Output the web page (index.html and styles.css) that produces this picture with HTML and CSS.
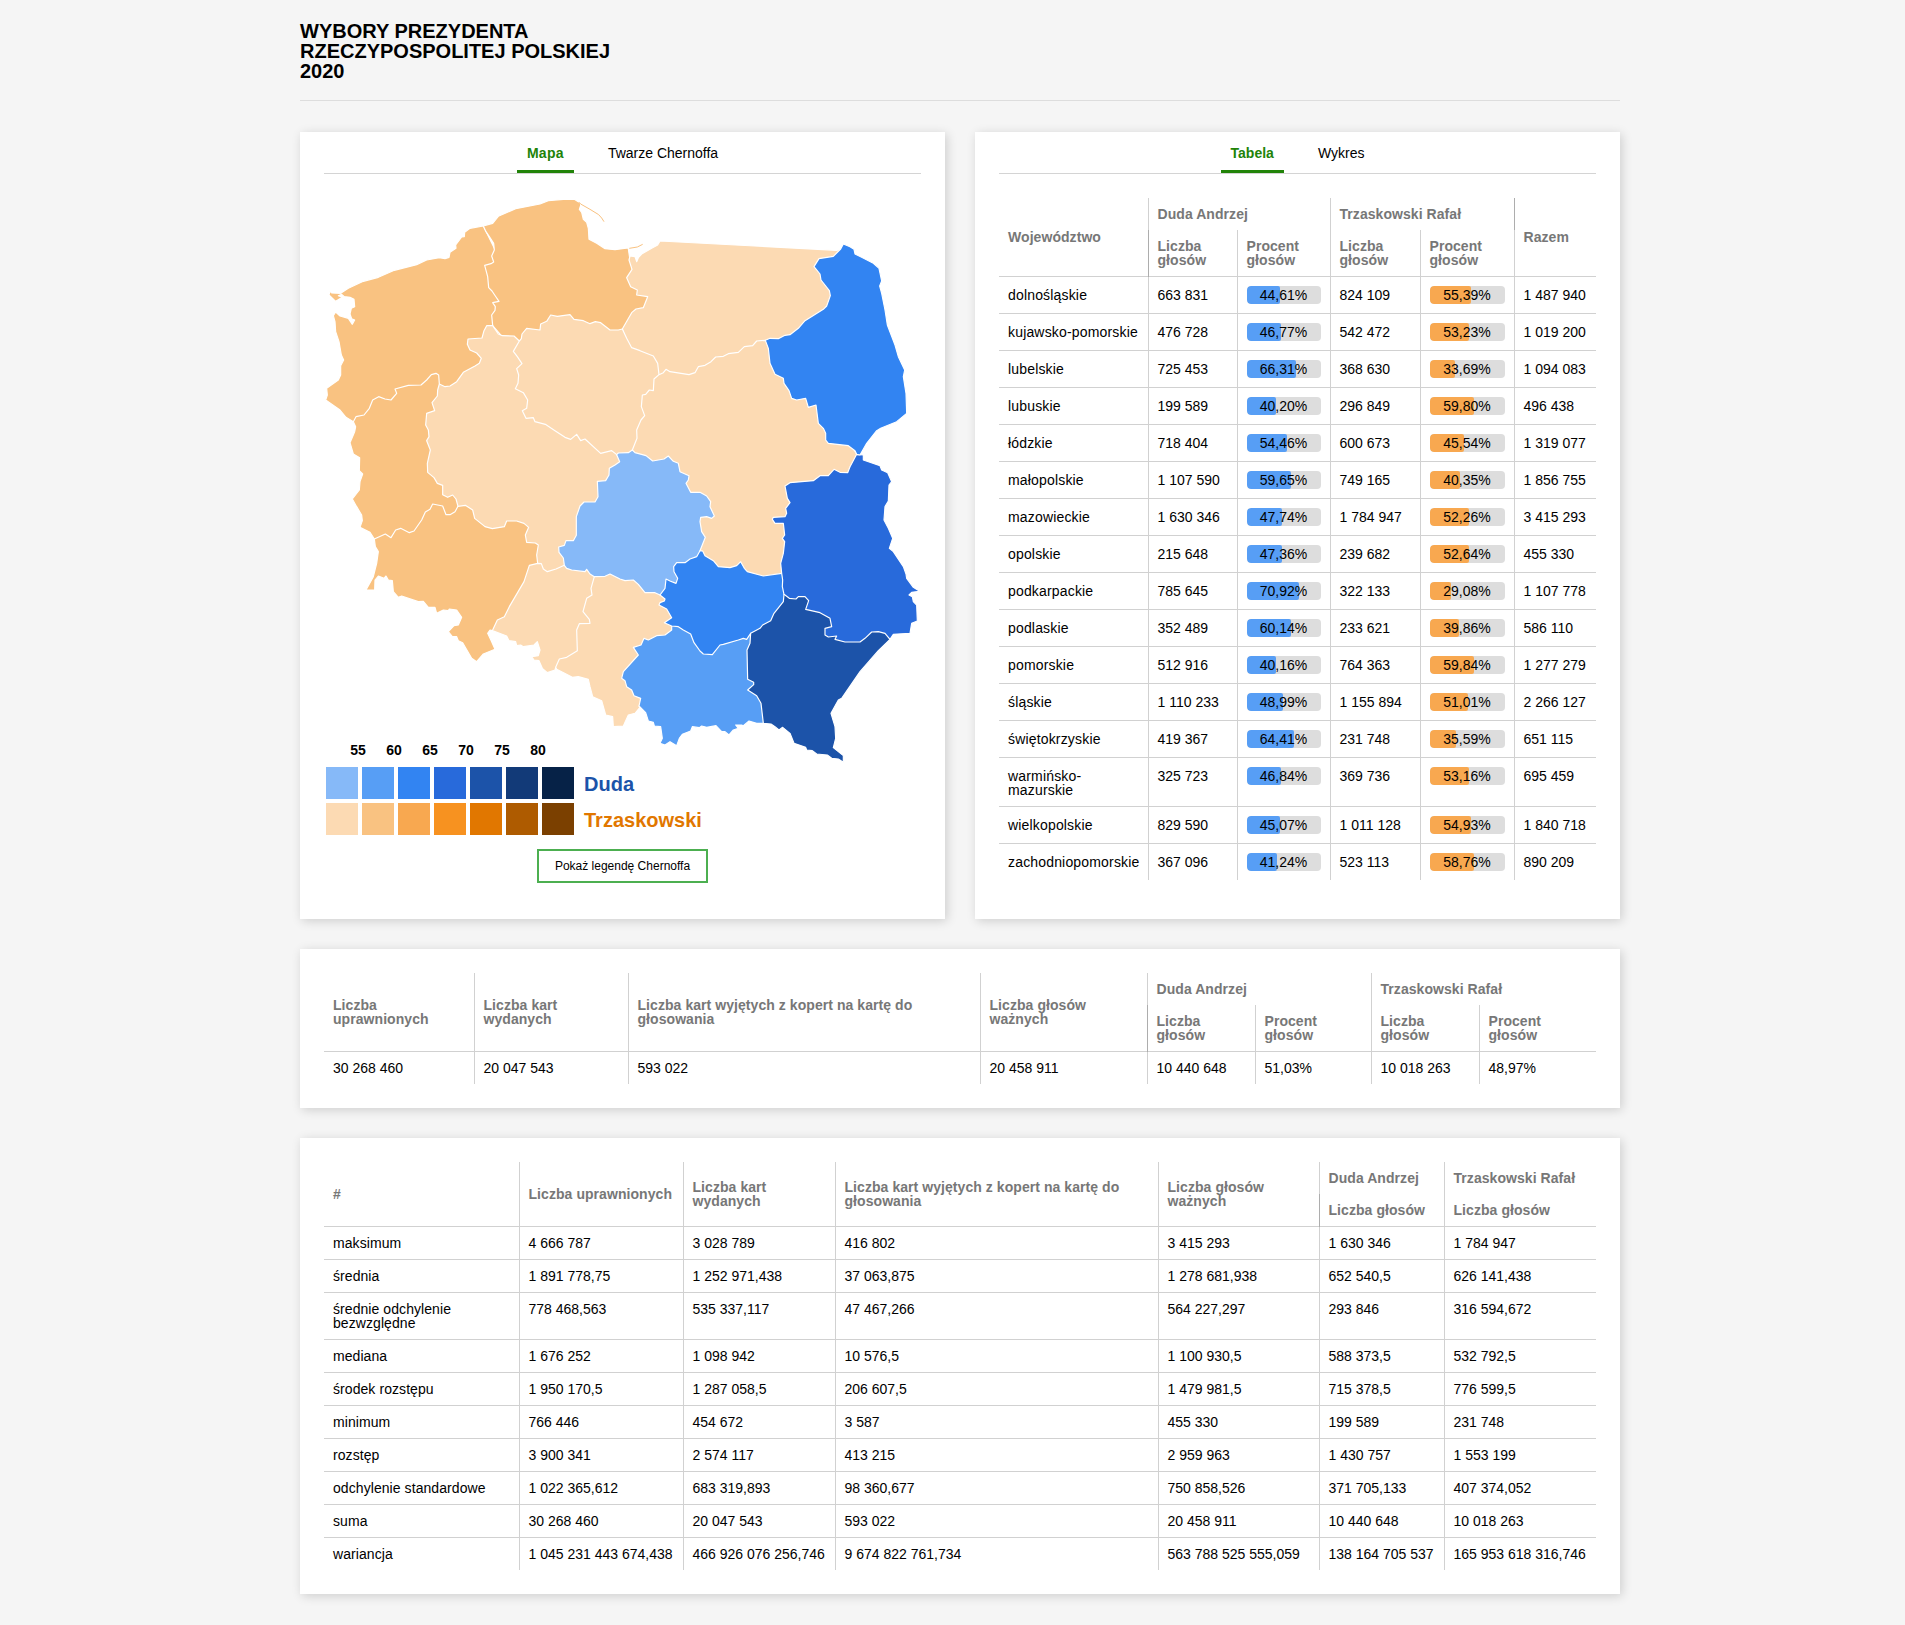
FILE: index.html
```html
<!DOCTYPE html>
<html lang="pl">
<head>
<meta charset="utf-8">
<title>Wybory Prezydenta Rzeczypospolitej Polskiej 2020</title>
<link rel="stylesheet" href="styles.css">
</head>
<body>
<div class="page">
<header class="header"><h1 class="title">WYBORY PREZYDENTA<br>RZECZYPOSPOLITEJ POLSKIEJ<br>2020</h1></header>
<main class="content">
<div class="columns">
<section class="card card-tall">
<nav class="tabs"><a class="tab tab-active tab-map">Mapa</a><a class="tab">Twarze Chernoffa</a></nav>
<div class="map-area">
<svg class="map" viewBox="42 54 1791 1701">
<!-- zachodniopomorskie -->
<path class="t2" d="M520,138 480,145 464,157 463,170 455,171 437,195 438,205 420,217 417,232 405,236 388,233 350,240 320,254 253,271 205,292 160,304 115,325 92,340 65,339 60,333 57,345 77,364 97,352 85,347 95,343 103,350 120,352 132,358 134,380 124,385 120,402 125,416 134,420 127,433 115,415 90,408 77,396 70,407 75,425 77,455 87,485 94,525 101,540 92,557 92,585 85,600 50,625 52,645 47,660 90,690 108,712 130,725 300,700 450,700 600,500 600,300Z"/>
<!-- pomorskie -->
<path class="t2" d="M520,138 548,130 565,109 617,86 690,72 715,62 760,58 793,58 812,70 812,76 808,88 815,97 820,118 830,127 835,145 837,178 860,190 885,206 915,209 960,203 955,207 960,240 1000,300 1040,350 950,500 620,520 548,437 545,405 555,391 556,380 548,368 567,364 556,348 546,333 536,323 533,290 524,256 543,251 551,246 545,228 553,210 551,190 540,173 528,155Z"/>
<path class="spit" d="M806,66 812,72 840,88 866,104 875,114 882,125M958,205 982,201 998,193"/>
<!-- warmińsko-mazurskie -->
<path class="t1" d="M1592,207 1580,211 1050,183 1043,195 1025,205 995,222 985,233 980,245 975,230 960,228 957,240 966,268 950,293 962,320 982,330 980,345 1013,350 1000,383 978,387 965,398 937,447 1000,640 1366,560 1600,400 1600,250Z"/>
<!-- wielkopolskie -->
<path class="t1" d="M548,437 565,462 577,467 612,468 628,483 700,600 750,700 960,850 850,1100 763,1180 683,1200 500,1060 444,1020 330,900 330,650 370,610 388,612 405,620 420,618 440,605 460,577 495,558 508,550 514,535 500,519 480,510 472,493 474,477 516,474 522,452 530,437Z"/>
<!-- kujawsko-pomorskie -->
<path class="t1" d="M628,483 634,476 636,462 650,445 690,450 692,432 710,424 722,405 742,409 780,404 792,418 820,422 840,431 856,425 872,428 900,450 925,450 937,447 950,475 965,503 990,512 1030,528 1043,550 1047,584 1080,650 1030,850 940,850 920,824 905,812 872,820 825,777 812,782 800,763 782,778 765,772 735,752 706,733 675,725 670,713 648,715 637,692 650,685 653,660 640,638 616,626 624,610 626,585 620,566 636,551 622,530 610,514Z"/>
<!-- mazowieckie -->
<path class="t1" d="M1047,584 1060,578 1068,568 1080,575 1137,584 1155,578 1165,560 1185,556 1203,545 1217,531 1240,529 1255,521 1285,517 1303,500 1328,497 1340,483 1366,481 1450,550 1600,750 1640,823 1600,1000 1450,1200 1250,1200 1170,1160 1100,1000 1050,900 967,830 967,810 981,775 980,750 993,720 1004,707 994,680 997,645 1007,643 1018,630 1030,632 1032,597Z"/>
<!-- lubuskie -->
<path class="t2" d="M388,612 386,585 378,580 364,584 350,600 333,615 295,616 255,627 260,640 243,660 225,657 206,650 188,660 178,685 162,705 138,710 130,725 137,740 134,755 120,788 130,822 149,833 148,872 158,882 150,905 148,930 127,957 140,980 155,1005 157,1022 150,1042 180,1057 193,1077 300,1120 444,1050 444,979 438,957 428,945 413,952 398,944 398,916 382,910 372,893 353,877 352,850 361,810 350,782 357,770 355,750 347,735 350,700 374,692 366,668 382,648 383,630Z"/>
<!-- dolnośląskie -->
<path class="t2" d="M444,979 466,976 488,990 494,1015 525,1040 547,1046 583,1040 590,1023 620,1023 642,1030 656,1042 646,1065 650,1087 676,1089 685,1095 680,1125 683,1150 700,1250 600,1350 547,1352 540,1350 533,1360 545,1385 555,1408 520,1422 500,1445 485,1435 458,1388 445,1382 440,1370 427,1370 415,1355 432,1337 445,1335 455,1312 440,1290 418,1287 415,1292 400,1290 380,1300 375,1282 355,1282 340,1264 325,1265 275,1248 265,1252 250,1235 247,1202 235,1200 228,1188 222,1195 205,1188 195,1200 194,1230 168,1230 190,1190 200,1150 205,1115 196,1100 193,1077 226,1062 243,1073 257,1050 272,1045 298,1058 312,1053 335,1020 346,996 360,988 368,972 398,978 408,1004 420,1004 435,995Z"/>
<!-- opolskie -->
<path class="t1" d="M683,1150 658,1156 642,1205 598,1280 583,1310 562,1320 547,1352 590,1368 597,1382 617,1385 620,1397 632,1395 640,1400 672,1395 682,1385 690,1410 685,1427 665,1430 672,1440 687,1442 697,1465 712,1478 735,1470 737,1462 780,1460 900,1350 900,1250 870,1150 763,1156 738,1167 712,1175 700,1167 694,1151Z"/>
<!-- łódzkie -->
<path class="d1" d="M763,1156 760,1134 747,1117 746,1101 763,1096 768,1082 790,1082 799,1066 799,1010 810,978 822,966 855,966 864,950 862,904 887,902 897,885 898,865 915,855 929,845 920,824 925,819 955,818 967,810 975,818 1008,827 1028,843 1062,837 1075,828 1090,844 1105,850 1110,875 1137,887 1135,900 1128,910 1142,937 1170,937 1190,948 1202,965 1200,980 1213,1008 1205,1015 1190,1010 1172,1012 1170,1025 1175,1055 1186,1072 1170,1112 1180,1200 1050,1280 900,1240 853,1190 840,1182 830,1168 825,1175 785,1170 770,1165Z"/>
<!-- śląskie -->
<path class="t1" d="M853,1190 885,1189 900,1182 930,1197 945,1202 970,1200 985,1213 1005,1238 1035,1238 1050,1245 1150,1260 1150,1400 1050,1500 987,1578 990,1582 975,1600 955,1605 940,1638 910,1640 908,1610 887,1605 875,1562 848,1550 840,1520 835,1498 805,1490 787,1492 755,1475 740,1468 737,1462 748,1437 770,1432 802,1412 800,1350 808,1331 840,1330 838,1318 819,1295 830,1255 846,1245 843,1225Z"/>
<!-- małopolskie -->
<path class="d2" d="M1085,1338 1085,1350 1065,1365 1040,1367 1015,1380 1002,1375 993,1395 970,1402 985,1425 940,1475 935,1495 945,1502 950,1520 965,1530 972,1547 992,1555 987,1578 1007,1598 1015,1623 1030,1627 1033,1638 1052,1640 1057,1675 1050,1690 1065,1695 1080,1685 1100,1697 1108,1675 1117,1663 1142,1653 1147,1640 1168,1643 1175,1638 1190,1642 1218,1637 1235,1655 1245,1655 1257,1665 1270,1650 1285,1645 1277,1635 1295,1635 1300,1637 1317,1623 1340,1630 1360,1630 1420,1600 1420,1450 1322,1300 1200,1300Z"/>
<!-- świętokrzyskie -->
<path class="d3" d="M1170,1112 1178,1113 1185,1127 1210,1142 1225,1160 1260,1163 1280,1157 1292,1145 1303,1165 1312,1175 1360,1188 1415,1180 1450,1200 1480,1300 1400,1380 1322,1360 1310,1378 1300,1375 1285,1380 1240,1393 1230,1395 1207,1424 1180,1422 1170,1413 1152,1388 1142,1362 1120,1350 1105,1340 1085,1338 1063,1328 1085,1313 1070,1287 1047,1275 1050,1268 1063,1263 1065,1257 1050,1245 1065,1225 1068,1197 1080,1203 1098,1210 1103,1195 1092,1175 1091,1160 1100,1148 1125,1148 1140,1137 1160,1130Z"/>
<!-- podkarpackie -->
<path class="d5" d="M1360,1630 1383,1632 1395,1640 1407,1650 1418,1642 1440,1660 1452,1690 1487,1702 1490,1710 1507,1712 1520,1722 1552,1725 1565,1735 1585,1737 1600,1747 1600,1727 1570,1703 1577,1675 1575,1640 1563,1600 1585,1560 1595,1555 1615,1526 1650,1475 1705,1412 1740,1378 1700,1300 1500,1200 1422,1243 1420,1265 1392,1300 1382,1322 1358,1335 1350,1345 1322,1360 1320,1390 1311,1410 1313,1498 1331,1507 1331,1514 1313,1530 1340,1547 1353,1570Z"/>
<!-- lubelskie -->
<path class="d4" d="M1740,1378 1750,1363 1800,1360 1805,1330 1822,1323 1820,1275 1810,1265 1807,1250 1797,1245 1805,1237 1829,1234 1810,1222 1790,1195 1788,1182 1780,1160 1770,1145 1750,1115 1738,1105 1748,1075 1735,1045 1722,1020 1725,980 1735,963 1737,915 1745,905 1733,878 1715,870 1710,857 1660,840 1660,825 1640,823 1620,860 1613,878 1590,877 1572,868 1555,887 1530,887 1510,902 1440,908 1425,918 1432,955 1440,968 1427,985 1430,1000 1425,1010 1390,1012 1387,1018 1395,1030 1420,1030 1424,1065 1417,1075 1424,1085 1420,1120 1412,1150 1415,1180 1418,1200 1417,1220 1422,1243 1438,1255 1458,1257 1465,1250 1485,1250 1496,1262 1487,1288 1530,1298 1560,1315 1565,1340 1545,1345 1545,1365 1555,1371 1580,1368 1575,1378 1605,1386 1650,1386 1665,1375 1685,1356 1705,1355 1725,1360Z"/>
<!-- podlaskie -->
<path class="d3" d="M1640,823 1635,812 1615,797 1555,790 1547,780 1547,760 1540,745 1525,730 1518,675 1495,682 1487,655 1460,660 1445,655 1437,632 1422,610 1420,595 1395,583 1380,550 1375,505 1366,481 1380,475 1405,476 1425,466 1440,464 1465,445 1485,422 1540,388 1550,378 1561,347 1558,332 1533,300 1530,282 1512,260 1527,236 1570,229 1592,207 1600,192 1620,200 1632,208 1635,222 1655,232 1690,250 1707,265 1715,303 1709,318 1715,340 1725,390 1732,435 1755,495 1765,530 1784,570 1780,590 1788,640 1790,700 1760,725 1712,745 1700,752 1670,790 1650,825Z"/>
</svg>
<div class="legend">
<div class="scale"><span>55</span><span>60</span><span>65</span><span>70</span><span>75</span><span>80</span></div>
<div class="swatches"><i class="sw d1"></i><i class="sw d2"></i><i class="sw d3"></i><i class="sw d4"></i><i class="sw d5"></i><i class="sw d6"></i><i class="sw d7"></i><b class="name name-duda">Duda</b></div>
<div class="swatches"><i class="sw t1"></i><i class="sw t2"></i><i class="sw t3"></i><i class="sw t4"></i><i class="sw t5"></i><i class="sw t6"></i><i class="sw t7"></i><b class="name name-trz">Trzaskowski</b></div>
</div>
</div>
<button class="button" type="button">Pokaż legendę Chernoffa</button>
</section>
<section class="card card-tall">
<nav class="tabs"><a class="tab tab-active">Tabela</a><a class="tab">Wykres</a></nav>
<table class="table regions">
<colgroup><col class="w149"><col class="w89"><col class="w93"><col class="w90"><col class="w94"><col class="w82"></colgroup>
<thead>
<tr><th rowspan="2">Województwo</th><th colspan="2">Duda Andrzej</th><th class="group-end" colspan="2">Trzaskowski Rafał</th><th rowspan="2">Razem</th></tr>
<tr><th>Liczba<br>głosów</th><th>Procent<br>głosów</th><th>Liczba<br>głosów</th><th>Procent<br>głosów</th></tr>
</thead>
<tbody>
<tr><td>dolnośląskie</td><td>663 831</td><td><div class="bar"><i class="fill duda" style="width:44.61%"></i><span>44,61%</span></div></td><td>824 109</td><td><div class="bar"><i class="fill trz" style="width:55.39%"></i><span>55,39%</span></div></td><td>1 487 940</td></tr>
<tr><td>kujawsko-pomorskie</td><td>476 728</td><td><div class="bar"><i class="fill duda" style="width:46.77%"></i><span>46,77%</span></div></td><td>542 472</td><td><div class="bar"><i class="fill trz" style="width:53.23%"></i><span>53,23%</span></div></td><td>1 019 200</td></tr>
<tr><td>lubelskie</td><td>725 453</td><td><div class="bar"><i class="fill duda" style="width:66.31%"></i><span>66,31%</span></div></td><td>368 630</td><td><div class="bar"><i class="fill trz" style="width:33.69%"></i><span>33,69%</span></div></td><td>1 094 083</td></tr>
<tr><td>lubuskie</td><td>199 589</td><td><div class="bar"><i class="fill duda" style="width:40.20%"></i><span>40,20%</span></div></td><td>296 849</td><td><div class="bar"><i class="fill trz" style="width:59.80%"></i><span>59,80%</span></div></td><td>496 438</td></tr>
<tr><td>łódzkie</td><td>718 404</td><td><div class="bar"><i class="fill duda" style="width:54.46%"></i><span>54,46%</span></div></td><td>600 673</td><td><div class="bar"><i class="fill trz" style="width:45.54%"></i><span>45,54%</span></div></td><td>1 319 077</td></tr>
<tr><td>małopolskie</td><td>1 107 590</td><td><div class="bar"><i class="fill duda" style="width:59.65%"></i><span>59,65%</span></div></td><td>749 165</td><td><div class="bar"><i class="fill trz" style="width:40.35%"></i><span>40,35%</span></div></td><td>1 856 755</td></tr>
<tr><td>mazowieckie</td><td>1 630 346</td><td><div class="bar"><i class="fill duda" style="width:47.74%"></i><span>47,74%</span></div></td><td>1 784 947</td><td><div class="bar"><i class="fill trz" style="width:52.26%"></i><span>52,26%</span></div></td><td>3 415 293</td></tr>
<tr><td>opolskie</td><td>215 648</td><td><div class="bar"><i class="fill duda" style="width:47.36%"></i><span>47,36%</span></div></td><td>239 682</td><td><div class="bar"><i class="fill trz" style="width:52.64%"></i><span>52,64%</span></div></td><td>455 330</td></tr>
<tr><td>podkarpackie</td><td>785 645</td><td><div class="bar"><i class="fill duda" style="width:70.92%"></i><span>70,92%</span></div></td><td>322 133</td><td><div class="bar"><i class="fill trz" style="width:29.08%"></i><span>29,08%</span></div></td><td>1 107 778</td></tr>
<tr><td>podlaskie</td><td>352 489</td><td><div class="bar"><i class="fill duda" style="width:60.14%"></i><span>60,14%</span></div></td><td>233 621</td><td><div class="bar"><i class="fill trz" style="width:39.86%"></i><span>39,86%</span></div></td><td>586 110</td></tr>
<tr><td>pomorskie</td><td>512 916</td><td><div class="bar"><i class="fill duda" style="width:40.16%"></i><span>40,16%</span></div></td><td>764 363</td><td><div class="bar"><i class="fill trz" style="width:59.84%"></i><span>59,84%</span></div></td><td>1 277 279</td></tr>
<tr><td>śląskie</td><td>1 110 233</td><td><div class="bar"><i class="fill duda" style="width:48.99%"></i><span>48,99%</span></div></td><td>1 155 894</td><td><div class="bar"><i class="fill trz" style="width:51.01%"></i><span>51,01%</span></div></td><td>2 266 127</td></tr>
<tr><td>świętokrzyskie</td><td>419 367</td><td><div class="bar"><i class="fill duda" style="width:64.41%"></i><span>64,41%</span></div></td><td>231 748</td><td><div class="bar"><i class="fill trz" style="width:35.59%"></i><span>35,59%</span></div></td><td>651 115</td></tr>
<tr><td>warmińsko-<br>mazurskie</td><td>325 723</td><td><div class="bar"><i class="fill duda" style="width:46.84%"></i><span>46,84%</span></div></td><td>369 736</td><td><div class="bar"><i class="fill trz" style="width:53.16%"></i><span>53,16%</span></div></td><td>695 459</td></tr>
<tr><td>wielkopolskie</td><td>829 590</td><td><div class="bar"><i class="fill duda" style="width:45.07%"></i><span>45,07%</span></div></td><td>1 011 128</td><td><div class="bar"><i class="fill trz" style="width:54.93%"></i><span>54,93%</span></div></td><td>1 840 718</td></tr>
<tr><td>zachodniopomorskie</td><td>367 096</td><td><div class="bar"><i class="fill duda" style="width:41.24%"></i><span>41,24%</span></div></td><td>523 113</td><td><div class="bar"><i class="fill trz" style="width:58.76%"></i><span>58,76%</span></div></td><td>890 209</td></tr>
</tbody>
</table>
</section>
</div>
<section class="card">
<table class="table">
<colgroup><col class="w150"><col class="w154"><col class="w352"><col class="w167"><col class="w108"><col class="w116"><col class="w108"><col class="w117"></colgroup>
<thead>
<tr><th rowspan="2">Liczba<br>uprawnionych</th><th rowspan="2">Liczba kart<br>wydanych</th><th rowspan="2">Liczba kart wyjętych z kopert na kartę do<br>głosowania</th><th rowspan="2">Liczba głosów<br>ważnych</th><th colspan="2">Duda Andrzej</th><th colspan="2">Trzaskowski Rafał</th></tr>
<tr><th>Liczba<br>głosów</th><th>Procent<br>głosów</th><th>Liczba<br>głosów</th><th>Procent<br>głosów</th></tr>
</thead>
<tbody>
<tr><td>30 268 460</td><td>20 047 543</td><td>593 022</td><td>20 458 911</td><td>10 440 648</td><td>51,03%</td><td>10 018 263</td><td>48,97%</td></tr>
</tbody>
</table>
</section>
<section class="card">
<table class="table statistics">
<colgroup><col class="w195"><col class="w164"><col class="w152"><col class="w323"><col class="w161"><col class="w125"><col class="w152"></colgroup>
<thead>
<tr><th rowspan="2">#</th><th rowspan="2">Liczba uprawnionych</th><th rowspan="2">Liczba kart<br>wydanych</th><th rowspan="2">Liczba kart wyjętych z kopert na kartę do<br>głosowania</th><th rowspan="2">Liczba głosów<br>ważnych</th><th>Duda Andrzej</th><th>Trzaskowski Rafał</th></tr>
<tr><th>Liczba głosów</th><th>Liczba głosów</th></tr>
</thead>
<tbody>
<tr><td>maksimum</td><td>4 666 787</td><td>3 028 789</td><td>416 802</td><td>3 415 293</td><td>1 630 346</td><td>1 784 947</td></tr>
<tr><td>średnia</td><td>1 891 778,75</td><td>1 252 971,438</td><td>37 063,875</td><td>1 278 681,938</td><td>652 540,5</td><td>626 141,438</td></tr>
<tr><td>średnie odchylenie<br>bezwzględne</td><td>778 468,563</td><td>535 337,117</td><td>47 467,266</td><td>564 227,297</td><td>293 846</td><td>316 594,672</td></tr>
<tr><td>mediana</td><td>1 676 252</td><td>1 098 942</td><td>10 576,5</td><td>1 100 930,5</td><td>588 373,5</td><td>532 792,5</td></tr>
<tr><td>środek rozstępu</td><td>1 950 170,5</td><td>1 287 058,5</td><td>206 607,5</td><td>1 479 981,5</td><td>715 378,5</td><td>776 599,5</td></tr>
<tr><td>minimum</td><td>766 446</td><td>454 672</td><td>3 587</td><td>455 330</td><td>199 589</td><td>231 748</td></tr>
<tr><td>rozstęp</td><td>3 900 341</td><td>2 574 117</td><td>413 215</td><td>2 959 963</td><td>1 430 757</td><td>1 553 199</td></tr>
<tr><td>odchylenie standardowe</td><td>1 022 365,612</td><td>683 319,893</td><td>98 360,677</td><td>750 858,526</td><td>371 705,133</td><td>407 374,052</td></tr>
<tr><td>suma</td><td>30 268 460</td><td>20 047 543</td><td>593 022</td><td>20 458 911</td><td>10 440 648</td><td>10 018 263</td></tr>
<tr><td>wariancja</td><td>1 045 231 443 674,438</td><td>466 926 076 256,746</td><td>9 674 822 761,734</td><td>563 788 525 555,059</td><td>138 164 705 537</td><td>165 953 618 316,746</td></tr>
</tbody>
</table>
</section>
</main>
</div>
</body>
</html>
```
FILE: styles.css
```css
* { box-sizing: border-box; }
body {
  margin: 0;
  min-height: 1625px;
  background: #f5f5f5;
  color: #000;
  font: 14px/14px "Liberation Sans", Arial, Helvetica, sans-serif;
}
.page { width: 1320px; margin-left: 300px; }
.header { height: 101px; padding-top: 21px; border-bottom: 1px solid #ddd; }
.title { margin: 0; font-size: 20px; line-height: 20px; font-weight: 700; }
.content { display: flex; flex-direction: column; gap: 30px; padding-top: 31px; }
.columns { display: grid; grid-template-columns: 645px 645px; gap: 30px; }
.card { padding: 24px; background: #fff; box-shadow: 2px 2px 10px rgba(0, 0, 0, .16); }
.card-tall { height: 787px; padding-top: 0; }

.tabs {
  display: flex;
  justify-content: center;
  gap: 24px;
  height: 42px;
  margin-bottom: 24px;
  border-bottom: 1px solid #d4d4d4;
}
.tab { padding: 14px 10px 10px; border-bottom: 3px solid transparent; }
.tab-active { color: #218308; border-color: #218308; font-weight: 700; }
.tab-map { letter-spacing: .3px; }

.map-area { display: grid; height: 637px; }
.map, .legend { grid-area: 1 / 1; }
.map { display: block; width: 597px; height: 567px; }
.map path { stroke: #fff; stroke-width: 3.5; stroke-linejoin: round; }
.map .spit { fill: none; stroke: #f9c281; stroke-width: 3; }
.legend { align-self: end; padding-left: 2px; display: flex; flex-direction: column; gap: 4px; }
.scale { display: flex; padding: 0 0 6px 14px; font-weight: 700; }
.scale span { width: 36px; text-align: center; }
.swatches { display: flex; gap: 4px; align-items: center; height: 32px; }
.sw { width: 32px; height: 32px; }
.name { margin-left: 6px; padding-top: 2px; font-size: 20px; line-height: 24px; }
.name-duda { color: #1c53a9; }
.name-trz { color: #e17700; }

.d1 { fill: #86b9f8; background: #86b9f8; }
.d2 { fill: #579ef5; background: #579ef5; }
.d3 { fill: #3284f2; background: #3284f2; }
.d4 { fill: #286adb; background: #286adb; }
.d5 { fill: #1c53a9; background: #1c53a9; }
.d6 { background: #123a78; }
.d7 { background: #062247; }
.t1 { fill: #fcdab3; background: #fcdab3; }
.t2 { fill: #f9c281; background: #f9c281; }
.t3 { background: #f8a850; }
.t4 { background: #f79220; }
.t5 { background: #e17700; }
.t6 { background: #ae5b00; }
.t7 { background: #7b4000; }

.button {
  display: block;
  width: 171px;
  height: 34px;
  margin: 14px auto 0;
  padding: 0;
  border: 2px solid #4caf50;
  background: #fff;
  color: #000;
  font: 12px/14px "Liberation Sans", Arial, Helvetica, sans-serif;
}

.table { width: 100%; table-layout: fixed; border-collapse: collapse; }
.table th, .table td {
  height: 32px;
  padding: 9px;
  text-align: left;
  vertical-align: baseline;
  white-space: nowrap;
  border-left: 1px solid rgba(0, 0, 0, .18);
}
.table th { vertical-align: middle; color: #777; letter-spacing: .06px; }
.table tbody td { border-top: 1px solid rgba(0, 0, 0, .18); }
.table tr > :first-child { border-left: 0; }
.table thead tr + tr > :first-child { border-left: 1px solid rgba(0, 0, 0, .32); }
.table .group-end { border-right: 1px solid rgba(0, 0, 0, .32); }
.regions td:first-child { letter-spacing: .17px; }
.statistics td:first-child { letter-spacing: .07px; }

.bar { position: relative; height: 18px; padding: 2px 0; border-radius: 4px; background: #ddd; text-align: center; overflow: hidden; }
.bar span { position: relative; }
.fill { position: absolute; inset: 0 auto 0 0; border-radius: 4px 2px 2px 4px; }
.fill.duda { background: #579ef5; }
.fill.trz { background: #f8a850; }

.w82 { width: 82px; }
.w89 { width: 89px; }
.w90 { width: 90px; }
.w93 { width: 93px; }
.w94 { width: 94px; }
.w108 { width: 108px; }
.w116 { width: 116px; }
.w117 { width: 117px; }
.w125 { width: 125px; }
.w149 { width: 149px; }
.w150 { width: 150px; }
.w152 { width: 152px; }
.w154 { width: 154px; }
.w161 { width: 161px; }
.w164 { width: 164px; }
.w167 { width: 167px; }
.w195 { width: 195px; }
.w323 { width: 323px; }
.w352 { width: 352px; }
```
